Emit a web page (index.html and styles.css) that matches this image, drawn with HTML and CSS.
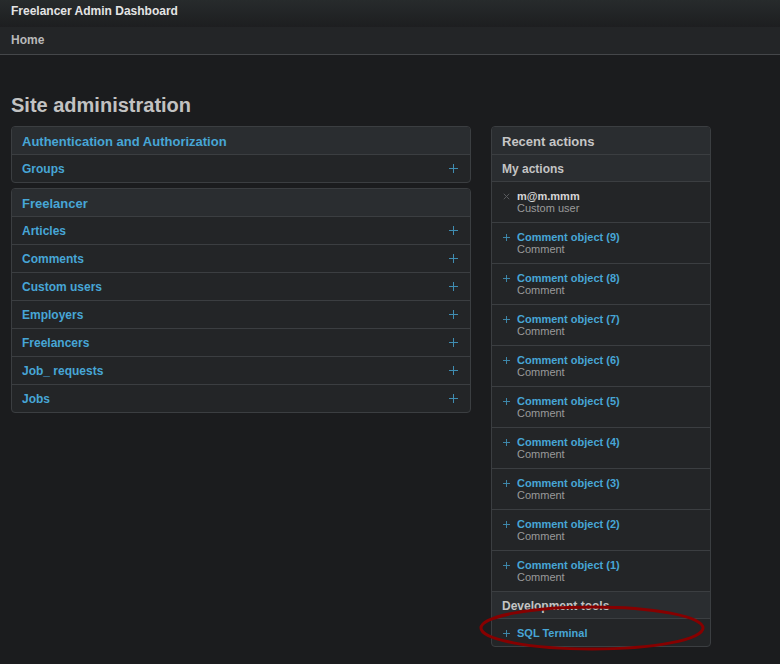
FILE: index.html
```html
<!DOCTYPE html>
<html lang="en">
<head>
<meta charset="utf-8">
<title>Site administration | Freelancer Admin Dashboard</title>
<link rel="stylesheet" href="styles.css">
</head>
<body>
<div class="header"><span class="brand">Freelancer Admin Dashboard</span></div>
<div class="crumbs">Home</div>
<div class="content">
  <h1 class="title">Site administration</h1>
  <div class="cols">
    <div class="main">
      <div class="module">
        <div class="caption">Authentication and Authorization</div>
        <div class="row"><span>Groups</span><svg class="plus" viewBox="0 0 9 9"><path d="M4.5 0V9M0 4.5H9"/></svg></div>
      </div>
      <div class="module">
        <div class="caption">Freelancer</div>
        <div class="row"><span>Articles</span><svg class="plus" viewBox="0 0 9 9"><path d="M4.5 0V9M0 4.5H9"/></svg></div>
        <div class="row"><span>Comments</span><svg class="plus" viewBox="0 0 9 9"><path d="M4.5 0V9M0 4.5H9"/></svg></div>
        <div class="row"><span>Custom users</span><svg class="plus" viewBox="0 0 9 9"><path d="M4.5 0V9M0 4.5H9"/></svg></div>
        <div class="row"><span>Employers</span><svg class="plus" viewBox="0 0 9 9"><path d="M4.5 0V9M0 4.5H9"/></svg></div>
        <div class="row"><span>Freelancers</span><svg class="plus" viewBox="0 0 9 9"><path d="M4.5 0V9M0 4.5H9"/></svg></div>
        <div class="row"><span>Job_ requests</span><svg class="plus" viewBox="0 0 9 9"><path d="M4.5 0V9M0 4.5H9"/></svg></div>
        <div class="row"><span>Jobs</span><svg class="plus" viewBox="0 0 9 9"><path d="M4.5 0V9M0 4.5H9"/></svg></div>
      </div>
    </div>
    <div class="side">
      <div class="module">
        <div class="caption gray">Recent actions</div>
        <div class="subcap">My actions</div>
        <div class="act first">
          <svg class="ico del" viewBox="0 0 9 9"><path d="M1 1L8 8M8 1L1 8"/></svg>
          <div class="txt"><div class="name plain">m@m.mmm</div><div class="kind">Custom user</div></div>
        </div>
        <div class="act"><svg class="ico" viewBox="0 0 9 9"><path d="M4.5 0V9M0 4.5H9"/></svg><div class="txt"><div class="name">Comment object (9)</div><div class="kind">Comment</div></div></div>
        <div class="act"><svg class="ico" viewBox="0 0 9 9"><path d="M4.5 0V9M0 4.5H9"/></svg><div class="txt"><div class="name">Comment object (8)</div><div class="kind">Comment</div></div></div>
        <div class="act"><svg class="ico" viewBox="0 0 9 9"><path d="M4.5 0V9M0 4.5H9"/></svg><div class="txt"><div class="name">Comment object (7)</div><div class="kind">Comment</div></div></div>
        <div class="act"><svg class="ico" viewBox="0 0 9 9"><path d="M4.5 0V9M0 4.5H9"/></svg><div class="txt"><div class="name">Comment object (6)</div><div class="kind">Comment</div></div></div>
        <div class="act"><svg class="ico" viewBox="0 0 9 9"><path d="M4.5 0V9M0 4.5H9"/></svg><div class="txt"><div class="name">Comment object (5)</div><div class="kind">Comment</div></div></div>
        <div class="act"><svg class="ico" viewBox="0 0 9 9"><path d="M4.5 0V9M0 4.5H9"/></svg><div class="txt"><div class="name">Comment object (4)</div><div class="kind">Comment</div></div></div>
        <div class="act"><svg class="ico" viewBox="0 0 9 9"><path d="M4.5 0V9M0 4.5H9"/></svg><div class="txt"><div class="name">Comment object (3)</div><div class="kind">Comment</div></div></div>
        <div class="act"><svg class="ico" viewBox="0 0 9 9"><path d="M4.5 0V9M0 4.5H9"/></svg><div class="txt"><div class="name">Comment object (2)</div><div class="kind">Comment</div></div></div>
        <div class="act"><svg class="ico" viewBox="0 0 9 9"><path d="M4.5 0V9M0 4.5H9"/></svg><div class="txt"><div class="name">Comment object (1)</div><div class="kind">Comment</div></div></div>
        <div class="subcap">Development tools</div>
        <div class="act tool"><svg class="ico" viewBox="0 0 9 9"><path d="M4.5 0V9M0 4.5H9"/></svg><div class="txt"><div class="name">SQL Terminal</div></div></div>
        <svg class="mark" viewBox="0 0 232 48"><ellipse cx="114" cy="23" rx="111" ry="21"/></svg>
      </div>
    </div>
  </div>
</div>
</body>
</html>
```

FILE: styles.css
```css
* { box-sizing: border-box; }
html, body { margin: 0; padding: 0; }
body {
  background: #1b1c1e;
  font-family: "Liberation Sans", Arial, sans-serif;
  color: #c4c4c4;
  min-height: 664px;
}
.header {
  height: 27px;
  padding: 3px 11px 0;
  background: linear-gradient(#272b2c, #1d1e20);
  line-height: 14px;
}
.brand { font-size: 12px; font-weight: bold; color: #e4e4e4; }
.crumbs {
  height: 28px;
  padding: 6px 11px 0;
  background: #232527;
  border-bottom: 1px solid #45474a;
  font-size: 12px;
  font-weight: bold;
  line-height: 14px;
  color: #b9b9b9;
}
.content { padding: 0 11px; }
.title {
  margin: 38px 0 9px;
  font-size: 20px;
  line-height: 24px;
  font-weight: bold;
  color: #c2c2c2;
}
.cols { display: flex; gap: 20px; align-items: flex-start; }
.main { width: 460px; display: flex; flex-direction: column; gap: 5px; }
.side { width: 220px; }
.module {
  position: relative;
  border: 1px solid #3b3e41;
  border-radius: 4px;
  background: #232527;
}
.caption {
  height: 28px;
  padding: 7px 10px 0;
  background: #2a2d30;
  border-bottom: 1px solid #3b3e41;
  border-radius: 3px 3px 0 0;
  font-size: 13px;
  line-height: 15px;
  font-weight: bold;
  color: #47a6d6;
}
.caption.gray { color: #c6c6c6; }
.row {
  height: 28px;
  display: flex;
  align-items: center;
  justify-content: space-between;
  padding: 0 12px 0 10px;
  border-bottom: 1px solid #3b3e41;
  font-size: 12px;
  font-weight: bold;
  color: #47a6d6;
}
.row:last-child { border-bottom: 0; height: 27px; }
.plus { width: 9px; height: 9px; stroke: #3f8db2; stroke-width: 1; fill: none; }
.subcap {
  height: 27px;
  padding: 7px 10px 0;
  background: #2a2d30;
  border-bottom: 1px solid #3b3e41;
  font-size: 12px;
  line-height: 14px;
  font-weight: bold;
  color: #c4c4c4;
}
.act {
  height: 41px;
  display: flex;
  align-items: flex-start;
  padding: 8px 10px 0 10px;
  border-bottom: 1px solid #3b3e41;
}
.act.tool { height: 27px; border-bottom: 0; padding-top: 8px; }
.ico { width: 7px; height: 7px; margin: 3px 7px 0 1px; stroke: #3f8db2; stroke-width: 1.2; fill: none; flex: none; }
.ico.del { stroke: #5d5f62; }
.name { font-size: 11px; line-height: 12px; font-weight: bold; color: #47a6d6; }
.name.plain { color: #d6d6d6; }
.kind { font-size: 11px; line-height: 13px; color: #9a9a9a; }
.mark {
  position: absolute;
  left: -14px;
  bottom: -7px;
  width: 232px;
  height: 48px;
  fill: none;
  stroke: #860000;
  stroke-width: 3;
}
```
